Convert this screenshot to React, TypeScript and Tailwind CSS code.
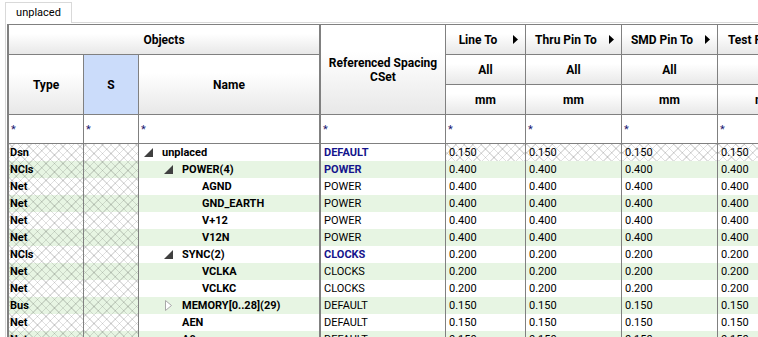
import React from 'react';

type Row = {
  type: string;
  name: string;
  level: number;
  node?: 'open' | 'closed';
  ref: string;
  refBold?: boolean;
  value: string;
  locked?: boolean;
};

const rows: Row[] = [
  { type: 'Dsn', name: 'unplaced', level: 0, node: 'open', ref: 'DEFAULT', refBold: true, value: '0.150', locked: true },
  { type: 'NCls', name: 'POWER(4)', level: 1, node: 'open', ref: 'POWER', refBold: true, value: '0.400' },
  { type: 'Net', name: 'AGND', level: 2, ref: 'POWER', value: '0.400' },
  { type: 'Net', name: 'GND_EARTH', level: 2, ref: 'POWER', value: '0.400' },
  { type: 'Net', name: 'V+12', level: 2, ref: 'POWER', value: '0.400' },
  { type: 'Net', name: 'V12N', level: 2, ref: 'POWER', value: '0.400' },
  { type: 'NCls', name: 'SYNC(2)', level: 1, node: 'open', ref: 'CLOCKS', refBold: true, value: '0.200' },
  { type: 'Net', name: 'VCLKA', level: 2, ref: 'CLOCKS', value: '0.200' },
  { type: 'Net', name: 'VCLKC', level: 2, ref: 'CLOCKS', value: '0.200' },
  { type: 'Bus', name: 'MEMORY[0..28](29)', level: 1, node: 'closed', ref: 'DEFAULT', value: '0.150' },
  { type: 'Net', name: 'AEN', level: 1, ref: 'DEFAULT', value: '0.150' },
  { type: 'Net', name: 'A0', level: 1, ref: 'DEFAULT', value: '0.150' },
];

const cols = 'grid grid-cols-[75px_55px_182px_125px_80px_96px_96px_96px]';
const hatch =
  'bg-[image:repeating-linear-gradient(45deg,rgba(0,0,0,0.12)_0_1px,transparent_1px_6px),repeating-linear-gradient(-45deg,rgba(0,0,0,0.12)_0_1px,transparent_1px_6px)]';
const head = 'bg-linear-to-b from-white from-30% to-[#e8e8e8] border-b border-[#808080] flex items-center justify-center font-bold text-[12px] text-black';

const Arrow = () => (
  <svg width="5" height="9" viewBox="0 0 5 9" className="ml-[3px] mr-[7px] shrink-0">
    <polygon points="0,0 5,4.5 0,9" fill="#000" />
  </svg>
);

const Twisty = ({ node }: { node: 'open' | 'closed' }) =>
  node === 'open' ? (
    <svg width="9" height="9" viewBox="0 0 9 9" className="shrink-0">
      <polygon points="9,0 9,9 0,9" fill="#404040" />
    </svg>
  ) : (
    <svg width="9" height="11" viewBox="0 0 9 11" className="shrink-0">
      <polygon points="1.5,0.5 7.5,5.5 1.5,10.5" fill="#fff" stroke="#a8a8a8" />
    </svg>
  );

const HeadArrowCell = ({ label }: { label: string }) => (
  <div className={`${head} border-r`}>
    <span className="flex-1 text-center whitespace-nowrap">{label}</span>
    <Arrow />
  </div>
);

export default function App() {
  return (
    <div className="w-[758px] h-[337px] overflow-hidden bg-white font-['Roboto',sans-serif] text-black pl-[5px] pt-[2px]">
      <div className="relative z-10 -mb-px w-[67px] h-[21px] bg-white border border-b-0 border-[#d9d9d9] flex items-center justify-center text-[11px]">
        unplaced
      </div>
      <div className="border-l border-t border-[#d9d9d9] h-[400px]">
        <div className="ml-px mt-px border-l-2 border-t border-[#808080] w-[900px]">
          <div className={`${cols} grid-rows-[30px_30px_30px_29px]`}>
            <div className={`${head} col-span-3 border-r-2`}>Objects</div>
            <div className={`${head} row-span-3 border-r flex-col leading-[14px]`}>
              <span>Referenced Spacing</span>
              <span>CSet</span>
            </div>
            <HeadArrowCell label="Line To" />
            <HeadArrowCell label="Thru Pin To" />
            <HeadArrowCell label="SMD Pin To" />
            <HeadArrowCell label="Test Pin To" />

            <div className={`${head} row-span-2 border-r`}>Type</div>
            <div className="row-span-2 border-r border-b border-[#808080] bg-[#cbdcfa] flex items-center justify-center font-bold text-[12px]">
              S
            </div>
            <div className={`${head} row-span-2 border-r-2`}>Name</div>
            {[0, 1, 2, 3].map((i) => (
              <div key={`all${i}`} className={`${head} border-r`}>
                All
              </div>
            ))}
            {[0, 1, 2, 3].map((i) => (
              <div key={`mm${i}`} className={`${head} border-r`}>
                mm
              </div>
            ))}

            {[0, 1, 2, 3, 4, 5, 6, 7].map((i) => (
              <div
                key={`f${i}`}
                className={`bg-white border-b border-[#808080] ${i === 2 ? 'border-r-2' : 'border-r'} flex items-center pl-[2px] pt-[2px] text-[11px] text-[#1a1a70]`}
              >
                *
              </div>
            ))}
          </div>

          {rows.map((r, idx) => {
            const green = idx % 2 === 1;
            const bg = green ? 'bg-[#e7f5e3]' : 'bg-white';
            const vals = r.locked ? `${bg} ${hatch}` : bg;
            return (
              <div key={idx} className={`${cols} h-[17px] text-[11px] leading-[17px]`}>
                <div className={`${bg} ${hatch} border-r border-[#808080] pl-px font-bold`}>{r.type}</div>
                <div className={`${bg} ${hatch} border-r border-[#808080]`} />
                <div className={`${bg} border-r-2 border-[#808080] flex items-center font-bold whitespace-nowrap`}>
                  {r.node ? (
                    <>
                      <span style={{ width: 5 + r.level * 20 }} className="shrink-0" />
                      <Twisty node={r.node} />
                      <span className="ml-[9px]">{r.name}</span>
                    </>
                  ) : (
                    <>
                      <span style={{ width: 23 + r.level * 20 }} className="shrink-0" />
                      <span>{r.name}</span>
                    </>
                  )}
                </div>
                <div className={`${bg} border-r border-[#808080] pl-[3px] ${r.refBold ? 'font-bold text-[#14148c]' : ''}`}>
                  {r.ref}
                </div>
                {[0, 1, 2, 3].map((i) => (
                  <div key={i} className={`${vals} border-r border-[#808080] pl-[3px]`}>
                    {r.value}
                  </div>
                ))}
              </div>
            );
          })}
        </div>
      </div>
    </div>
  );
}
